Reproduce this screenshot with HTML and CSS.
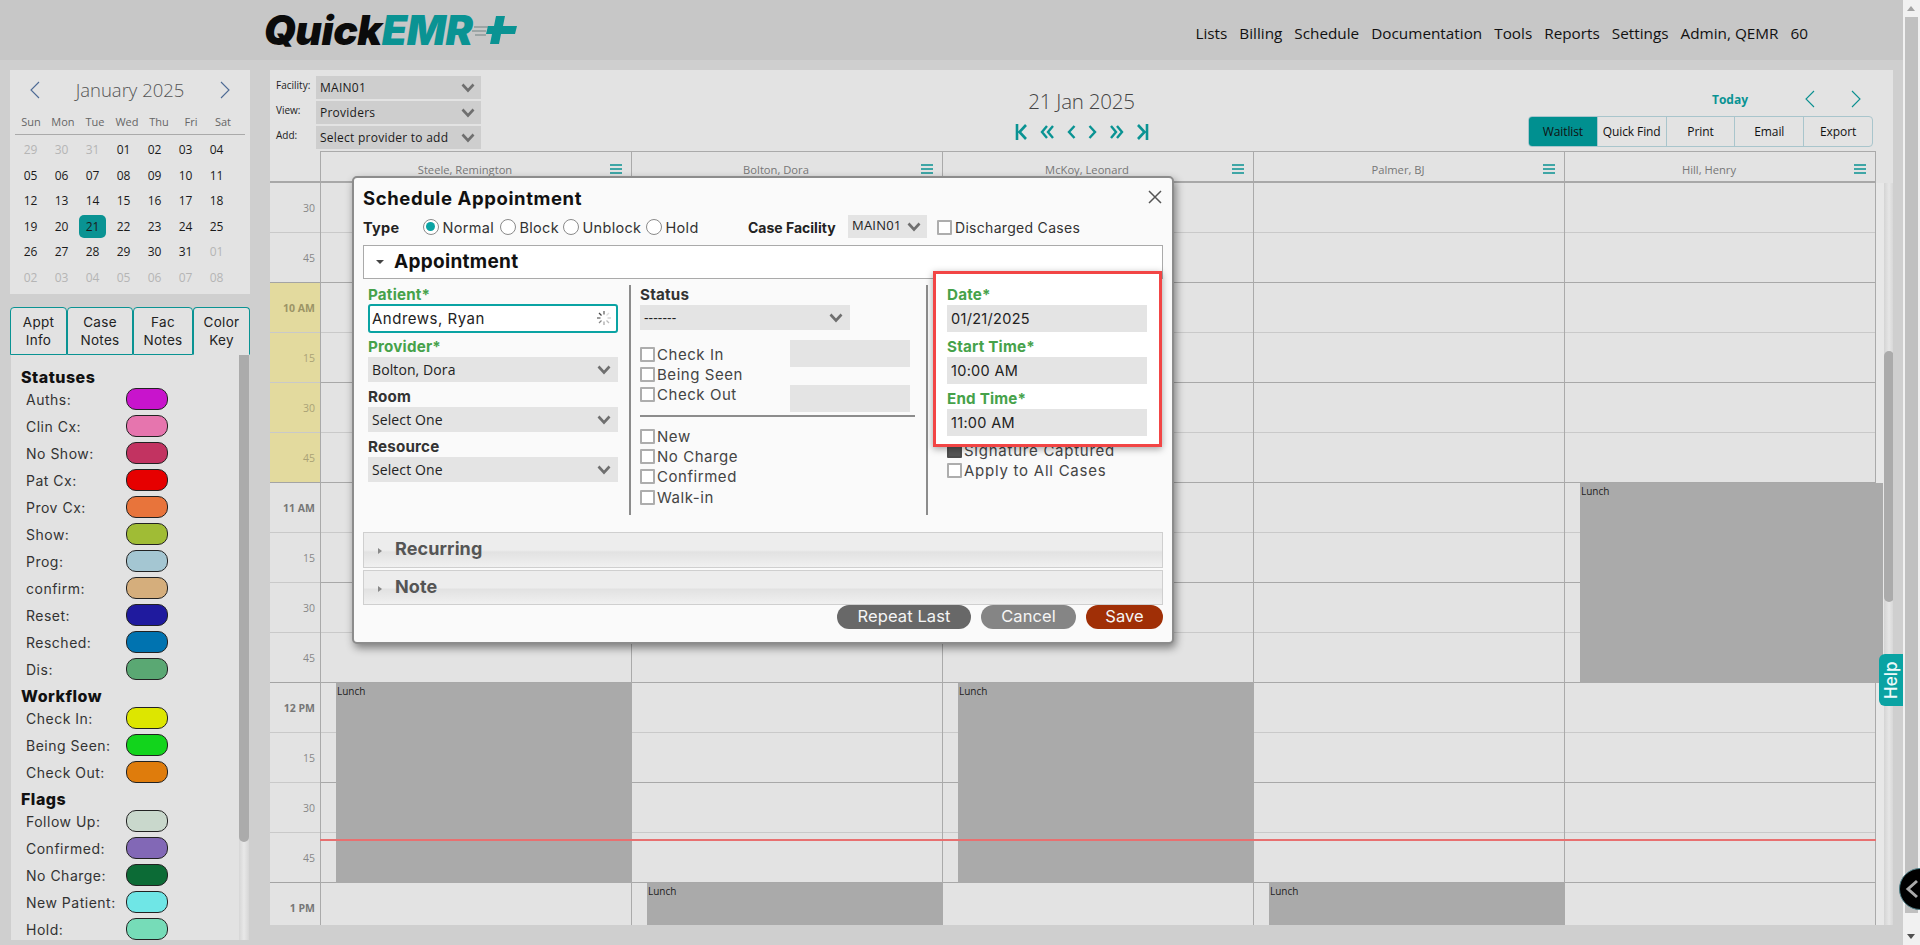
FILE: index.html
```html
<!DOCTYPE html>
<html lang="en">
<head>
<meta charset="utf-8">
<title>QuickEMR Schedule</title>
<link rel="stylesheet" href="styles.css">
</head>
<body>
<svg class="defs" width="0" height="0" aria-hidden="true">
  <symbol id="chev" viewBox="0 0 14 10"><path d="M1.5 1.5 7 7.5l5.5-6" fill="none" stroke="currentColor" stroke-width="2.6"/></symbol>
  <symbol id="burger" viewBox="0 0 12 10"><path d="M0 1h12M0 5h12M0 9h12" fill="none" stroke="currentColor" stroke-width="1.4"/></symbol>
  <symbol id="arrow-l" viewBox="0 0 12 20"><path d="M10 2 2 10l8 8" fill="none" stroke="currentColor" stroke-width="1.1"/></symbol>
  <symbol id="arrow-r" viewBox="0 0 12 20"><path d="M2 2l8 8-8 8" fill="none" stroke="currentColor" stroke-width="1.1"/></symbol>
</svg>
<div class="app">
  <header class="topbar">
    <div class="logo"><span class="logo-q">Quick</span><span class="logo-e">EMR</span>
      <svg class="logo-plus" viewBox="0 0 46 30" width="46" height="30"><path d="M2 12h14M0 16h14M3 20h11" stroke="#8f9a9a" stroke-width="1.6"/><path d="M24 1h9l-2 10h14l-2 8H29l-2 10h-9l2-10h-6l2-8h6z" fill="#0a9393"/></svg>
    </div>
    <nav class="menu"><a>Lists</a><a>Billing</a><a>Schedule</a><a>Documentation</a><a>Tools</a><a>Reports</a><a>Settings</a><a>Admin, QEMR</a><a>60</a></nav>
  </header>
  <div class="content">
    <aside class="sidebar">
      <section class="calendar">
        <div class="cal-head">
          <svg class="cal-arrow"><use href="#arrow-l"/></svg>
          <span class="cal-title">January 2025</span>
          <svg class="cal-arrow"><use href="#arrow-r"/></svg>
        </div>
        <div class="cal-week"><span>Sun</span><span>Mon</span><span>Tue</span><span>Wed</span><span>Thu</span><span>Fri</span><span>Sat</span></div>
        <div class="cal-days">
          <span class="off">29</span><span class="off">30</span><span class="off">31</span><span>01</span><span>02</span><span>03</span><span>04</span>
          <span>05</span><span>06</span><span>07</span><span>08</span><span>09</span><span>10</span><span>11</span>
          <span>12</span><span>13</span><span>14</span><span>15</span><span>16</span><span>17</span><span>18</span>
          <span>19</span><span>20</span><span class="today">21</span><span>22</span><span>23</span><span>24</span><span>25</span>
          <span>26</span><span>27</span><span>28</span><span>29</span><span>30</span><span>31</span><span class="off">01</span>
          <span class="off">02</span><span class="off">03</span><span class="off">04</span><span class="off">05</span><span class="off">06</span><span class="off">07</span><span class="off">08</span>
        </div>
      </section>
      <div class="tabs">
        <div class="tab t1">Appt<br>Info</div>
        <div class="tab t2">Case<br>Notes</div>
        <div class="tab t3">Fac<br>Notes</div>
        <div class="tab t4 active">Color<br>Key</div>
      </div>
      <section class="keypanel">
        <div class="keylist">
          <h4>Statuses</h4>
          <div class="key"><span>Auths:</span><i class="c-auths"></i></div>
          <div class="key"><span>Clin Cx:</span><i class="c-clin"></i></div>
          <div class="key"><span>No Show:</span><i class="c-noshow"></i></div>
          <div class="key"><span>Pat Cx:</span><i class="c-pat"></i></div>
          <div class="key"><span>Prov Cx:</span><i class="c-prov"></i></div>
          <div class="key"><span>Show:</span><i class="c-show"></i></div>
          <div class="key"><span>Prog:</span><i class="c-prog"></i></div>
          <div class="key"><span>confirm:</span><i class="c-confirm"></i></div>
          <div class="key"><span>Reset:</span><i class="c-reset"></i></div>
          <div class="key"><span>Resched:</span><i class="c-resched"></i></div>
          <div class="key"><span>Dis:</span><i class="c-dis"></i></div>
          <h4>Workflow</h4>
          <div class="key"><span>Check In:</span><i class="c-in"></i></div>
          <div class="key"><span>Being Seen:</span><i class="c-seen"></i></div>
          <div class="key"><span>Check Out:</span><i class="c-out"></i></div>
          <h4>Flags</h4>
          <div class="key"><span>Follow Up:</span><i class="c-follow"></i></div>
          <div class="key"><span>Confirmed:</span><i class="c-confirmed"></i></div>
          <div class="key"><span>No Charge:</span><i class="c-charge"></i></div>
          <div class="key"><span>New Patient:</span><i class="c-new"></i></div>
          <div class="key"><span>Hold:</span><i class="c-hold"></i></div>
        </div>
        <div class="minibar"><div class="minithumb"></div></div>
      </section>
    </aside>
    <main class="schedule">
      <div class="toolbar">
        <div class="filters">
          <div class="filter"><label>Facility:</label><div class="fsel">MAIN01<svg class="chev"><use href="#chev"/></svg></div></div>
          <div class="filter"><label>View:</label><div class="fsel">Providers<svg class="chev"><use href="#chev"/></svg></div></div>
          <div class="filter"><label>Add:</label><div class="fsel">Select provider to add<svg class="chev"><use href="#chev"/></svg></div></div>
        </div>
        <div class="datebox">
          <div class="bigdate">21 Jan 2025</div>
          <div class="datenav">
            <svg viewBox="0 0 13 16" width="13" height="16"><path d="M2 0v16M11 1 4.5 8l6.5 7" fill="none" stroke="#0a9393" stroke-width="2.6"/></svg>
            <svg viewBox="0 0 15 16" width="15" height="16"><path d="M7 2 2 8l5 6M13 2 8 8l5 6" fill="none" stroke="#0a9393" stroke-width="2.4"/></svg>
            <svg viewBox="0 0 9 16" width="9" height="16"><path d="M7.500 2 2 8l5.500 6" fill="none" stroke="#0a9393" stroke-width="2.4"/></svg>
            <svg viewBox="0 0 9 16" width="9" height="16"><path d="M1.500 2 7 8l-5.500 6" fill="none" stroke="#0a9393" stroke-width="2.4"/></svg>
            <svg viewBox="0 0 15 16" width="15" height="16"><path d="M2 2l5 6-5 6M8 2l5 6-5 6" fill="none" stroke="#0a9393" stroke-width="2.4"/></svg>
            <svg viewBox="0 0 13 16" width="13" height="16"><path d="M11 0v16M2 1l6.500 7L2 15" fill="none" stroke="#0a9393" stroke-width="2.6"/></svg>
          </div>
        </div>
        <div class="actions">
          <div class="todayrow">
            <span class="todaylink">Today</span>
            <svg class="day-arrow"><use href="#arrow-l"/></svg>
            <svg class="day-arrow"><use href="#arrow-r"/></svg>
          </div>
          <div class="btngroup"><span class="on">Waitlist</span><span>Quick Find</span><span>Print</span><span>Email</span><span>Export</span></div>
        </div>
      </div>
      <div class="gridhead">
        <div class="headgap"></div>
        <div class="prov">Steele, Remington<svg class="burger"><use href="#burger"/></svg></div>
        <div class="prov">Bolton, Dora<svg class="burger"><use href="#burger"/></svg></div>
        <div class="prov">McKoy, Leonard<svg class="burger"><use href="#burger"/></svg></div>
        <div class="prov">Palmer, BJ<svg class="burger"><use href="#burger"/></svg></div>
        <div class="prov">Hill, Henry<svg class="burger"><use href="#burger"/></svg></div>
      </div>
      <div class="gridbody">
        <div class="times">
          <div class="slot">30</div><div class="slot hourend">45</div>
          <div class="slot am hl">10 AM</div><div class="slot am">15</div><div class="slot am">30</div><div class="slot am hourend">45</div>
          <div class="slot hl">11 AM</div><div class="slot">15</div><div class="slot">30</div><div class="slot hourend">45</div>
          <div class="slot hl">12 PM</div><div class="slot">15</div><div class="slot">30</div><div class="slot hourend">45</div>
          <div class="slot hl">1 PM</div>
        </div>
        <div class="day"><div class="lunch at12">Lunch</div></div>
        <div class="day"><div class="lunch at1">Lunch</div></div>
        <div class="day"><div class="lunch at12">Lunch</div></div>
        <div class="day"><div class="lunch at1">Lunch</div></div>
        <div class="day lastday"><div class="lunch at11">Lunch</div></div>
        <div class="lane"><div class="lanethumb"></div></div>
        <div class="nowline"></div>
      </div>
    </main>
  </div>
</div>
<div class="pagebar"><span class="up"></span><div class="pagethumb"></div><span class="down"></span></div>

<section class="modal">
  <h2>Schedule Appointment</h2>
  <svg class="close" viewBox="0 0 14 14" width="14" height="14"><path d="M1 1l12 12M13 1 1 13" stroke="#555" stroke-width="1.5"/></svg>
  <div class="typerow">
    <b class="typelabel">Type</b>
    <span class="radio picked"></span><span class="rlabel w-normal">Normal</span>
    <span class="radio"></span><span class="rlabel w-block">Block</span>
    <span class="radio"></span><span class="rlabel w-unblock">Unblock</span>
    <span class="radio"></span><span class="rlabel w-hold">Hold</span>
    <b class="caselabel">Case Facility</b>
    <div class="casesel">MAIN01<svg class="chev"><use href="#chev"/></svg></div>
    <span class="box disc"></span><span class="cklabel">Discharged Cases</span>
  </div>
  <div class="apptbar"><span class="caret down-caret"></span>Appointment</div>
  <div class="cols">
    <div class="col left">
      <div class="lab req">Patient*</div>
      <div class="patient">Andrews, Ryan
        <svg class="spin" viewBox="0 0 16 16" width="16" height="16"><g stroke-width="1.3" fill="none"><path d="M8 1v3.500" stroke="#666"/><path d="M3 3l2.500 2.500" stroke="#444"/><path d="M1 8h3.500" stroke="#666"/><path d="M3 13l2.500-2.500" stroke="#888"/><path d="M8 15v-3.500" stroke="#aaa"/><path d="M13 13l-2.500-2.500" stroke="#bbb"/><path d="M15 8h-3.500" stroke="#ccc"/><path d="M13 3l-2.500 2.500" stroke="#ddd"/></g></svg>
      </div>
      <div class="lab req gap4">Provider*</div>
      <div class="sel mt2">Bolton, Dora<svg class="chev"><use href="#chev"/></svg></div>
      <div class="lab gap6">Room</div>
      <div class="sel mt1">Select One<svg class="chev"><use href="#chev"/></svg></div>
      <div class="lab gap6">Resource</div>
      <div class="sel mt1">Select One<svg class="chev"><use href="#chev"/></svg></div>
    </div>
    <div class="vr"></div>
    <div class="col mid">
      <div class="lab status-lab">Status</div>
      <div class="sel status mt2">-------<svg class="chev"><use href="#chev"/></svg></div>
      <div class="checks">
        <div class="checklist">
          <div class="ck"><span class="box"></span>Check In</div>
          <div class="ck"><span class="box"></span>Being Seen</div>
          <div class="ck"><span class="box"></span>Check Out</div>
        </div>
        <div class="stamps"><div class="stamp"></div><div class="stamp"></div></div>
      </div>
      <div class="rule"></div>
      <div class="flags">
        <div class="ck"><span class="box"></span>New</div>
        <div class="ck"><span class="box"></span>No Charge</div>
        <div class="ck"><span class="box"></span>Confirmed</div>
        <div class="ck"><span class="box"></span>Walk-in</div>
      </div>
    </div>
    <div class="vr second"></div>
    <div class="col right">
      <div class="highlight">
        <div class="lab req">Date*</div>
        <div class="field">01/21/2025</div>
        <div class="lab req gap5">Start Time*</div>
        <div class="field">10:00 AM</div>
        <div class="lab req gap5">End Time*</div>
        <div class="field">11:00 AM</div>
      </div>
      <div class="afterbox">
        <div class="ck"><span class="box dark"></span>Signature Captured</div>
        <div class="ck"><span class="box"></span>Apply to All Cases</div>
      </div>
    </div>
  </div>
  <div class="fold first"><span class="caret right-caret"></span>Recurring</div>
  <div class="fold"><span class="caret right-caret"></span>Note</div>
  <div class="footer">
    <span class="btn repeat">Repeat Last</span>
    <span class="btn cancel">Cancel</span>
    <span class="btn save">Save</span>
  </div>
</section>
<div class="help">Help</div>
<div class="chat"><svg viewBox="0 0 14 20" width="14" height="20"><path d="M12 2 3 10l9 8" fill="none" stroke="#aaa" stroke-width="3"/></svg></div>
</body>
</html>
```
FILE: styles.css
```css
* { box-sizing: border-box; }
html, body { margin: 0; height: 945px; overflow: hidden; }
body { background: #cfcfcf; font-family: "Open Sans", sans-serif; color: #111; position: relative; }
.defs { position: absolute; }
.app { width: 1903px; height: 945px; display: flex; flex-direction: column; }
.topbar { height: 60px; background: #c7c7c7; display: flex; align-items: center; justify-content: space-between; padding: 0 95px 0 264px; flex: none; }
.logo { display: flex; align-items: center; font-family: Inter, sans-serif; font-weight: 900; font-style: italic; font-size: 41px; line-height: 40px; letter-spacing: -.5px; height: 40px; }
.logo-q { color: #0b0b0b; }
.logo-e { color: #0a9393; letter-spacing: -.5px; }
.logo-plus { margin-left: 0; flex: none; }
.menu { display: flex; gap: 12px; font-size: 15.3px; color: #111; padding-top: 6px; }
.content { flex: 1; display: flex; min-height: 0; padding-top: 10px; }
.sidebar { width: 270px; flex: none; padding-left: 10px; }
.calendar { width: 240px; height: 224px; background: #e3e3e3; padding: 0 5px; }
.cal-head { height: 41px; display: flex; align-items: center; justify-content: space-between; padding: 0 14px 2px 14px; color: #4d6a94; }
.cal-arrow { width: 12px; height: 20px; flex: none; }
.cal-title { font-weight: 300; font-size: 18.5px; color: #555; }
.cal-week { display: grid; grid-template-columns: repeat(7, 32px); height: 24px; line-height: 22px; font-size: 11px; color: #666; text-align: center; border-bottom: 1px solid #aaa; width: 230px; }
.cal-days { display: grid; grid-template-columns: repeat(7, 31px); grid-auto-rows: 25.5px; font-size: 12px; text-align: center; margin-top: 2px; color: #1a1a1a; }
.cal-days span { line-height: 25px; }
.cal-days .off { color: #b5b5b5; }
.cal-days .today { background: #0a9393; border-radius: 5px; width: 27px; height: 23px; line-height: 23px; margin: 1px 0 0 2px; }
.tabs { display: flex; width: 240px; margin-top: 13px; height: 48px; position: relative; }
.tab { background: #e2e2e2; border: 1.5px solid #0a9393; border-radius: 4px 4px 0 0; font-family: Inter, sans-serif; font-size: 13.5px; line-height: 18px; padding-top: 5px; text-align: center; letter-spacing: .3px; color: #222; }
.t1 { width: 57px; }
.t2 { width: 66px; }
.t3 { width: 60px; }
.t4 { width: 57px; }
.tab.active { border-bottom-color: #e2e2e2; }
.keypanel { width: 238px; margin-left: 1px; height: 585px; background: #e2e2e2; display: flex; overflow: hidden; }
.keylist { width: 228px; padding: 11px 0 0 10px; font-family: Inter, sans-serif; flex: none; }
.keylist h4 { margin: 0; height: 22px; line-height: 22px; font-size: 16px; font-weight: 800; color: #111; letter-spacing: .5px; }
.key { height: 27px; display: flex; align-items: flex-start; padding-left: 5px; font-size: 14px; letter-spacing: .5px; color: #333; }
.key span { width: 100px; line-height: 24px; white-space: nowrap; flex: none; }
.key i { display: block; width: 42px; height: 22px; border-radius: 10px; border: 1.3px solid #222; }
.c-auths { background: #c814cc; }
.c-clin { background: #e675ae; }
.c-noshow { background: #c23361; }
.c-pat { background: #e60000; }
.c-prov { background: #e8743b; }
.c-show { background: #a0bc35; }
.c-prog { background: #a4c6d2; }
.c-confirm { background: #d5ae7c; }
.c-reset { background: #1f1a9e; }
.c-resched { background: #0073b0; }
.c-dis { background: #5aa873; }
.c-in { background: #dde600; }
.c-seen { background: #12d41c; }
.c-out { background: #df7c0c; }
.c-follow { background: #c9d8cc; }
.c-confirmed { background: #8268b6; }
.c-charge { background: #0c6b36; }
.c-new { background: #6fe6e6; }
.c-hold { background: #76dcb8; }
.minibar { width: 10px; background: linear-gradient(90deg, #d6d6d6, #e8e8e8, #d6d6d6); }
.minithumb { height: 487px; background: #ababab; border-radius: 0 0 5px 5px; }
.schedule { width: 1623px; height: 855px; background: #e3e3e3; flex: none; display: flex; flex-direction: column; }
.toolbar { height: 81px; display: grid; grid-template-columns: 1fr auto 1fr; flex: none; }
.filters { padding: 6px 0 0 6px; display: flex; flex-direction: column; gap: 2px; }
.filter { display: flex; height: 23px; }
.filter label { width: 40px; font-size: 10px; color: #222; line-height: 18px; }
.fsel { width: 165px; height: 23px; background: #cecece; padding-left: 4px; font-size: 12px; line-height: 23px; position: relative; letter-spacing: .25px; color: #1a1a1a; }
.chev { position: absolute; right: 6px; top: 50%; margin-top: -5px; width: 14px; height: 10px; color: #6f6f6f; }
.datebox { text-align: center; padding-top: 17px; }
.bigdate { font-weight: 300; font-size: 20.5px; line-height: 28px; color: #444; height: 28px; letter-spacing: -.2px; }
.datenav { display: flex; gap: 12px; justify-content: center; margin-top: 9px; }
.datenav svg { display: block; }
.actions { display: flex; flex-direction: column; align-items: flex-end; padding-right: 20px; }
.todayrow { display: flex; align-items: center; height: 46px; padding: 12px 11px 0 0; }
.todaylink { font-size: 12px; font-weight: 700; color: #0a9393; margin-right: 56px; }
.day-arrow { width: 12px; height: 20px; color: #0a8f8f; }
.day-arrow + .day-arrow { margin-left: 34px; }
.btngroup { display: flex; width: 345px; height: 31px; border: 1px solid #a9c5cc; border-radius: 4px; overflow: hidden; }
.btngroup span { flex: 1; text-align: center; font-size: 12px; line-height: 29px; border-left: 1px solid #a9c5cc; color: #111; letter-spacing: -.1px; white-space: nowrap; }
.btngroup .on { background: #009090; border-left: 0; }
.gridhead { height: 32px; display: flex; flex: none; width: 1606px; border-bottom: 2px solid #a8a8a8; }
.headgap { width: 50px; flex: none; }
.prov { width: 311px; border-top: 1px solid #aaa; border-left: 1px solid #aaa; text-align: center; font-size: 11.2px; line-height: 36px; color: #777; position: relative; flex: none; height: 30px; padding-right: 22px; }
.prov:last-child { border-right: 1px solid #aaa; width: 312px; }
.burger { position: absolute; right: 9px; top: 12px; width: 12px; height: 10px; color: #0a9393; }
.gridbody { flex: 1; min-height: 0; display: flex; position: relative; overflow: hidden; }
.times { width: 50px; flex: none; }
.slot { height: 50px; text-align: right; padding-right: 5px; font-size: 10.5px; line-height: 50px; color: #888; border-bottom: 1px solid #c9c9c9; }
.slot.hl { font-weight: 700; font-size: 10.5px; color: #777; }
.slot.hourend { border-bottom-color: #a4a4a4; }
.slot.am { background: #e3da9e; color: #aaa276; }
.slot.am.hl { color: #9c9466; }
.day { width: 311px; flex: none; position: relative; border-left: 1px solid #aaa; background: repeating-linear-gradient(180deg, transparent 0 49px, #c9c9c9 49px 50px, transparent 50px 99px, #a8a8a8 99px 100px); }
.lastday { border-right: 1px solid #aaa; width: 312px; }
.lunch { position: absolute; left: 15px; width: 295px; background: #aaaaaa; font-size: 10px; line-height: 14px; padding: 1px 0 0 1px; color: #222; }
.at11 { top: 300px; height: 200px; width: 303px; z-index: 1; }
.at12 { top: 500px; height: 200px; }
.at1 { top: 700px; height: 100px; }
.lane { flex: 1; background: #e8e8e8; position: relative; }
.lanethumb { position: absolute; left: 8px; top: 0; width: 10px; height: 100%; background: linear-gradient(90deg, #d4d4d4, #e6e6e6, #d4d4d4); }
.lanethumb::after { content: ""; position: absolute; left: 0; top: 168px; width: 10px; height: 251px; background: #ababab; border-radius: 5px; }
.nowline { position: absolute; left: 50px; top: 656px; width: 1556px; height: 2px; background: #e87070; z-index: 2; }
.pagebar { position: absolute; right: 0; top: 0; width: 17px; height: 945px; background: #f1f1f1; }
.pagethumb { position: absolute; left: 2px; top: 17px; width: 13px; height: 896px; background: #c0c0c0; }
.up, .down { position: absolute; left: 4px; width: 0; height: 0; border-left: 4px solid transparent; border-right: 4px solid transparent; }
.up { top: 6px; border-bottom: 5px solid #a3a3a3; }
.down { bottom: 6px; border-top: 5px solid #505050; }

.modal { position: absolute; left: 352px; top: 176px; width: 822px; height: 468px; background: #fafafa; border: 2px solid #8c8c8c; border-radius: 5px; box-shadow: 2px 4px 8px rgba(0,0,0,.45); padding: 10px 9px 0; font-family: Inter, sans-serif; z-index: 5; }
.modal h2 { margin: 0; font-size: 18.5px; line-height: 21px; font-weight: 700; color: #111; letter-spacing: .6px; }
.close { position: absolute; right: 10px; top: 12px; }
.typerow { display: flex; align-items: center; height: 23px; margin-top: 6px; font-size: 14.5px; color: #333; letter-spacing: .3px; }
.typelabel { width: 60px; font-weight: 700; color: #222; flex: none; padding-top: 2px; }
.radio { width: 16px; height: 16px; border: 1.5px solid #8a8a8a; border-radius: 50%; background: #fff; flex: none; position: relative; }
.radio.picked::after { content: ""; position: absolute; left: 2px; top: 2px; width: 9px; height: 9px; border-radius: 50%; background: #0aa3a3; }
.rlabel { margin-left: 3.5px; white-space: nowrap; flex: none; padding-top: 2px; }
.w-normal { width: 57.5px; }
.w-block { width: 43.5px; }
.w-unblock { width: 63.5px; }
.w-hold { width: 82.5px; }
.caselabel { font-weight: 700; color: #222; white-space: nowrap; width: 100px; flex: none; letter-spacing: 0; font-size: 14px; padding-top: 2px; }
.casesel { width: 79px; height: 23px; background: #e4e4e4; font-family: "Open Sans", sans-serif; font-size: 13px; line-height: 21px; padding-left: 4px; position: relative; letter-spacing: .2px; color: #222; flex: none; }
.box { display: inline-block; width: 15px; height: 15px; border: 2px solid #adadad; background: #fff; flex: none; border-radius: 1px; }
.box.disc { margin-left: 10px; margin-top: 2px; }
.box.dark { background: #555; border-color: #4d4d4d; }
.cklabel { margin-left: 3px; white-space: nowrap; letter-spacing: .3px; color: #333; font-size: 14px; padding-top: 2px; }
.apptbar { height: 34px; margin-top: 7px; border: 1px solid #aaa; background: #fff; font-size: 19px; font-weight: 700; line-height: 32px; padding-left: 30px; position: relative; color: #111; letter-spacing: .3px; }
.caret { position: absolute; width: 0; height: 0; }
.down-caret { left: 12px; top: 14px; border-left: 4px solid transparent; border-right: 4px solid transparent; border-top: 4px solid #444; }
.right-caret { left: 14px; top: 15px; border-top: 3.5px solid transparent; border-bottom: 3.5px solid transparent; border-left: 4px solid #888; }
.cols { height: 230px; margin-top: 6px; display: flex; }
.col { flex: none; }
.left { width: 250px; margin-left: 5px; }
.vr { width: 2px; background: #8c8c8c; flex: none; }
.left + .vr { margin-left: 11px; }
.mid { width: 275px; margin-left: 9px; }
.second { margin-left: 11px; }
.right { width: 229px; margin-left: 5px; }
.lab { height: 18px; line-height: 18px; font-size: 15.2px; font-weight: 700; color: #333; letter-spacing: .2px; white-space: nowrap; }
.lab.req, .lab.status-lab { line-height: 20px; }
.lab.req { color: #46a24a; }
.gap4 { margin-top: 4px; }
.gap5 { margin-top: 5px; }
.gap6 { margin-top: 6px; }
.mt1 { margin-top: 1px; }
.mt2 { margin-top: 2px; }
.patient { height: 29px; margin-top: 1px; border: 2px solid #0aa3a3; border-radius: 3px; background: #fff; font-size: 15px; line-height: 25px; padding-left: 2px; position: relative; letter-spacing: .5px; color: #222; }
.spin { position: absolute; right: 4px; top: 4px; }
.sel { height: 25px; background: #e4e4e4; font-family: "Open Sans", sans-serif; font-size: 14px; line-height: 26px; padding-left: 4px; position: relative; color: #222; letter-spacing: .1px; }
.sel .chev { right: 7px; }
.status { width: 210px; }
.checks { display: flex; margin-top: 10px; height: 72px; }
.checklist { width: 150px; padding-top: 4px; flex: none; }
.stamps { width: 120px; }
.stamp { height: 27px; background: #e4e4e4; margin-bottom: 18px; }
.ck { height: 20px; display: flex; align-items: center; gap: 2px; font-size: 15px; color: #444; letter-spacing: .55px; white-space: nowrap; }
.rule { height: 2px; background: #8c8c8c; margin-top: 3px; }
.flags { margin-top: 9px; }
.flags .ck { height: 20.3px; }
.highlight { position: relative; z-index: 2; margin-top: -14px; border: 3px solid #f24545; background: #fff; padding: 11px 12px 8px 11px; box-shadow: 0 2px 7px rgba(0,0,0,.35); }
.field { height: 27px; margin-top: 2px; background: #e4e4e4; font-size: 14.5px; line-height: 28px; padding-left: 4px; color: #222; letter-spacing: .3px; }
.afterbox { margin-top: -6px; padding-left: 14px; position: relative; z-index: 1; }
.afterbox .ck { height: 19.5px; letter-spacing: .75px; }
.fold { height: 35px; margin-top: 2px; border: 1px solid #cfcfcf; background: linear-gradient(180deg, #ededed 0 50%, #e2e2e2 56%, #f0f0f0 100%); font-size: 18px; font-weight: 700; line-height: 32px; padding-left: 31px; color: #555; position: relative; letter-spacing: .1px; }
.fold.first { margin-top: 17px; height: 36px; }
.footer { display: flex; justify-content: flex-end; gap: 10px; }
.btn { height: 24px; border-radius: 12px; color: #f5f5f5; font-size: 16.5px; line-height: 23px; text-align: center; letter-spacing: .1px; }
.repeat { width: 134px; background: #686868; }
.cancel { width: 95px; background: #858585; }
.save { width: 77px; background: #a02f06; }
.help { position: absolute; left: 1879px; top: 654px; width: 24px; height: 52px; background: #0aa3a3; color: #eefafa; writing-mode: vertical-rl; transform: rotate(180deg); border-radius: 0 6px 6px 0; text-align: center; font-family: Inter, sans-serif; font-size: 17px; font-weight: 500; line-height: 24px; z-index: 6; }
.chat { position: absolute; left: 1899px; top: 868px; width: 42px; height: 42px; border-radius: 50%; background: #000; border: 1px solid #4d7d85; z-index: 6; padding: 10px 0 0 5px; }
```
